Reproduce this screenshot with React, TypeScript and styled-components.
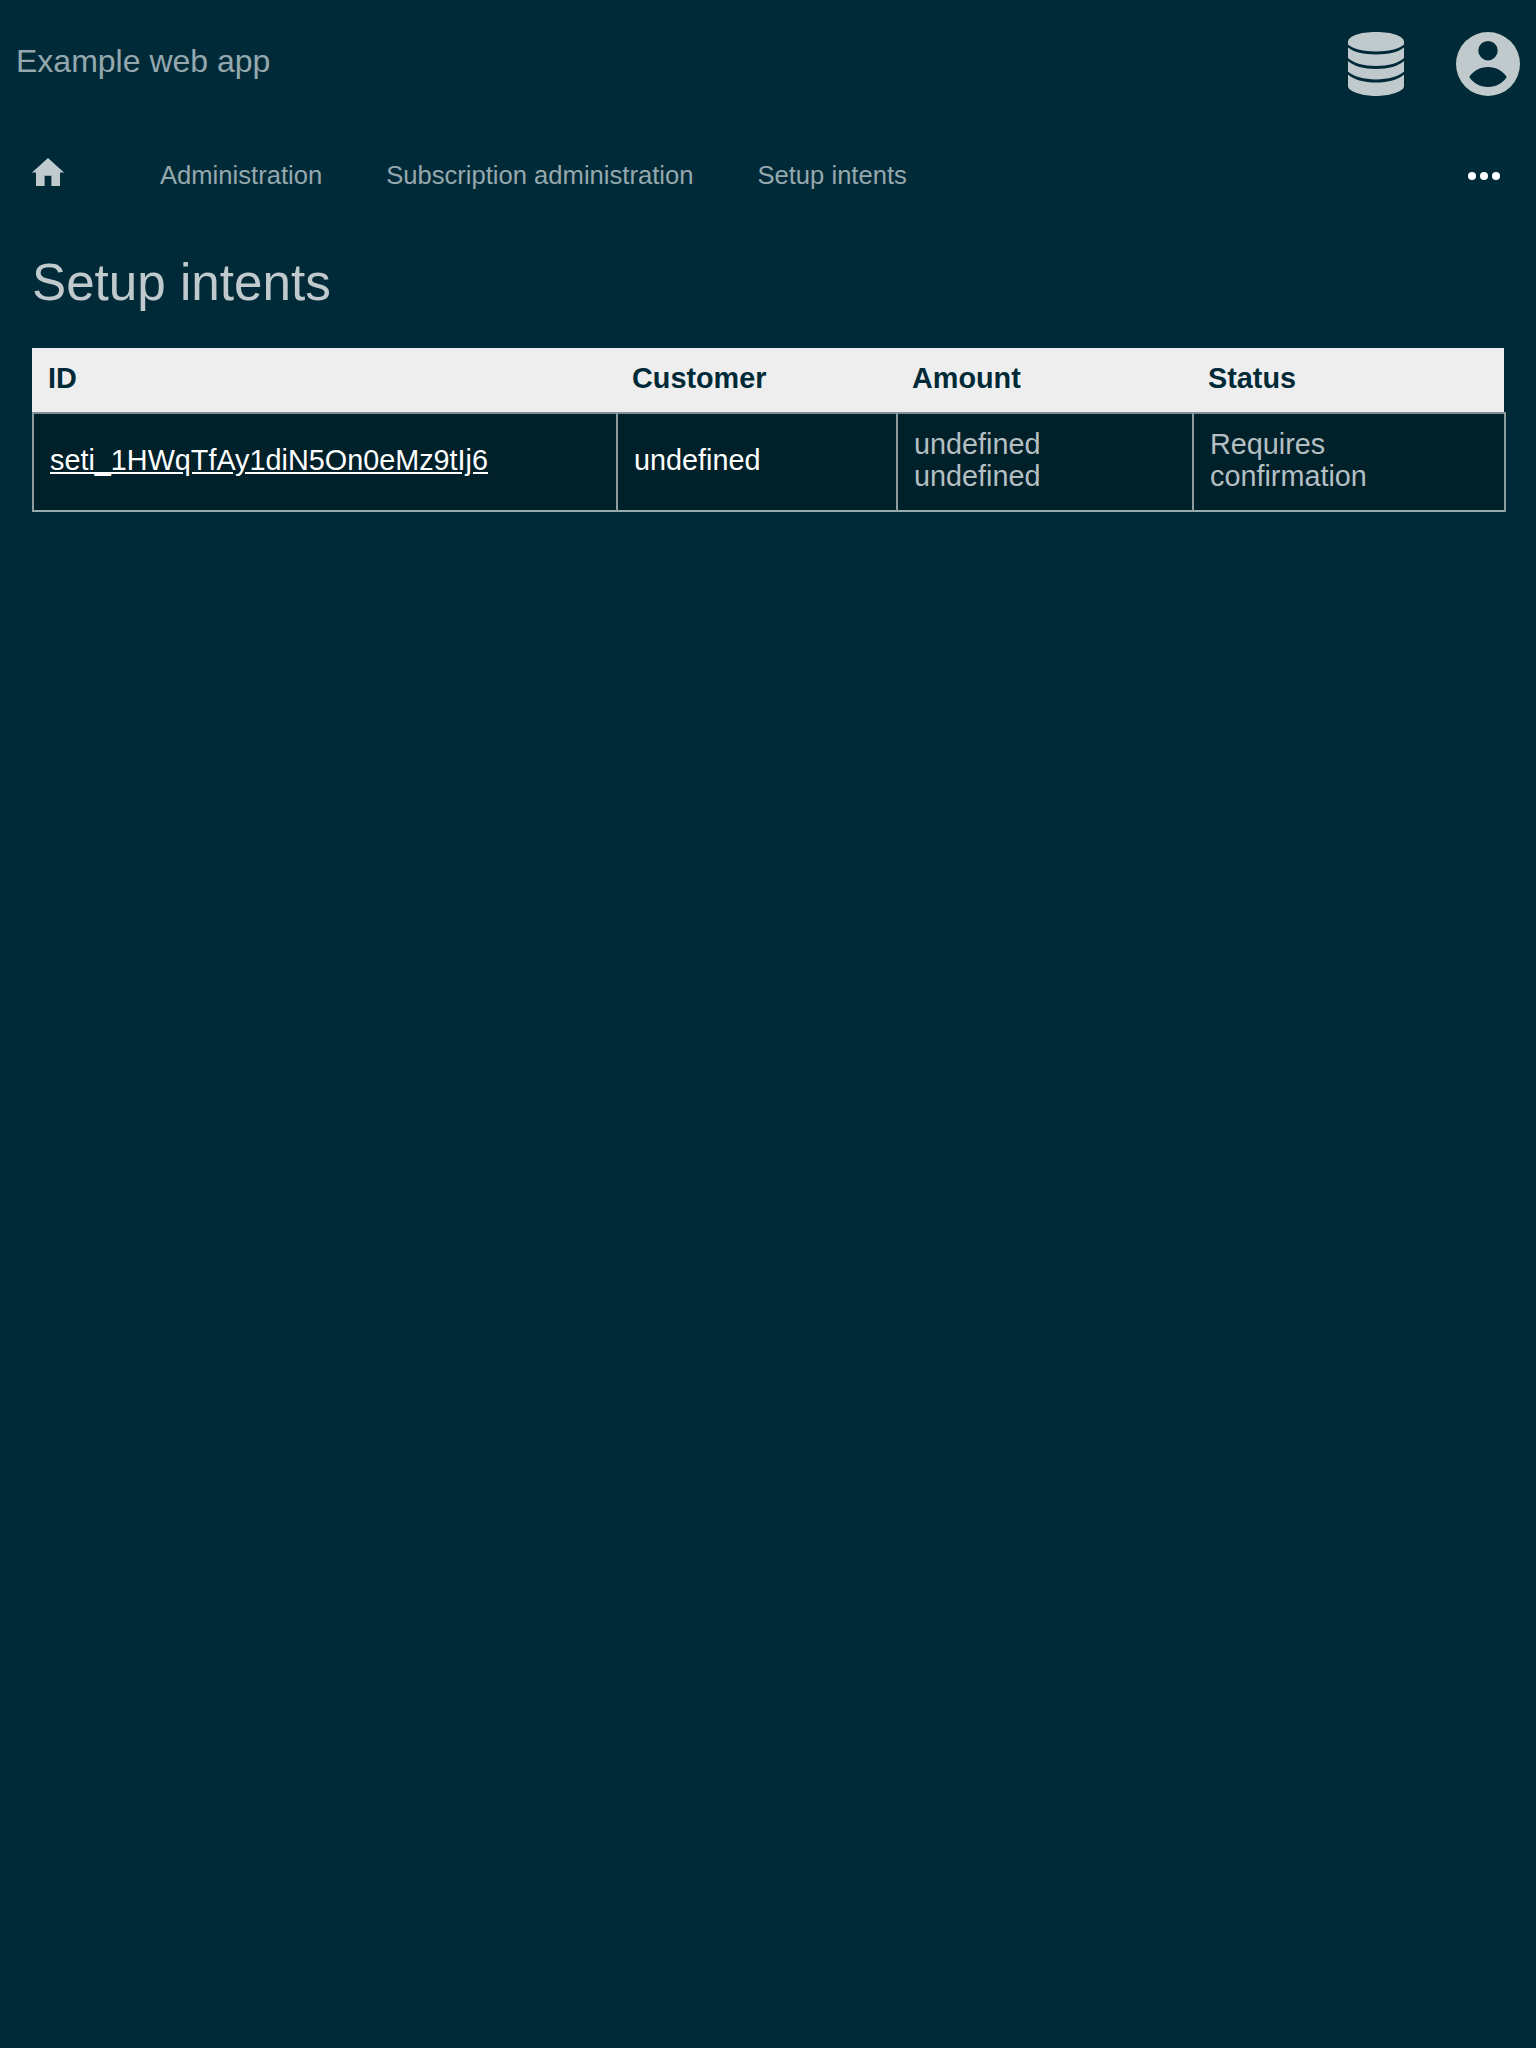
import React from 'react'
import styled, { createGlobalStyle } from 'styled-components'

const GlobalStyle = createGlobalStyle`
  html, body {
    margin: 0;
    padding: 0;
    min-height: 2048px;
    background: #012a38;
    font-family: "Liberation Sans", Arial, sans-serif;
  }
`

const Page = styled.div`
  min-height: 2048px;
  background: #012a38;
`

const TopBar = styled.header`
  display: flex;
  align-items: center;
  justify-content: space-between;
  height: 128px;
  padding: 0 16px;
  box-sizing: border-box;
`

const Brand = styled.a`
  font-size: 32px;
  color: #94a8ae;
  margin-bottom: 6px;
`

const TopIcons = styled.div`
  display: flex;
  align-items: center;
  gap: 52px;
  color: #c0cacd;
`

const Nav = styled.nav`
  display: flex;
  align-items: center;
  height: 96px;
  padding: 0 32px;
`

const HomeLink = styled.a`
  display: flex;
  color: #c0cacd;
  margin: 0 96px 8px 0;
`

const NavLink = styled.a`
  font-size: 25.6px;
  color: #94a8ae;
  margin: 0 64px 2px 0;
`

const More = styled.a`
  display: flex;
  gap: 4px;
  margin: 0 4px 0 auto;
`

const Dot = styled.span`
  width: 8px;
  height: 8px;
  border-radius: 50%;
  background: #ffffff;
`

const Main = styled.main`
  padding: 0 32px;
`

const Title = styled.h1`
  margin: 25px 0 31px;
  font-size: 51.2px;
  font-weight: 400;
  line-height: 68px;
  color: #c0cacd;
`

const Table = styled.table`
  width: 1472px;
  table-layout: fixed;
  border-collapse: separate;
  border-spacing: 0;
  font-size: 28.8px;
`

const HeadCell = styled.th<{ $width?: number }>`
  width: ${({ $width }) => ($width ? `${$width}px` : 'auto')};
  height: 64px;
  box-sizing: border-box;
  padding: 0 16px 4px;
  background: #eeeeee;
  color: #012a38;
  font-weight: 700;
  text-align: left;
`

const Cell = styled.td<{ $bright?: boolean; $last?: boolean }>`
  box-sizing: border-box;
  padding: 14px 16px 18px;
  background: #00202a;
  color: ${({ $bright }) => ($bright ? '#ffffff' : '#b3bfc3')};
  line-height: 32px;
  border-top: 2px solid #808f94;
  border-left: 2px solid #8d9b9f;
  border-bottom: 2px solid #99aaaf;
  box-shadow: ${({ $last }) => ($last ? '2px 0 0 #8d9b9f' : 'none')};
`

const IdLink = styled.a`
  color: #ffffff;
  text-decoration: underline;
`

const DatabaseIcon = () => (
  <svg width="56" height="64" viewBox="0 0 56 64" fill="currentColor">
    <path d="M0 10C0 4 12 0 28 0S56 4 56 10V12.5C51 17 40 19.4 28 19.4S5 17 0 12.5Z" />
    <path d="M0 15.5C5 20 16 22.4 28 22.4S51 20 56 15.5V26C51 31 40 34 28 34S5 31 0 26Z" />
    <path d="M0 29C5 34 16 37 28 37S51 34 56 29V39.5C51 44.5 40 47.4 28 47.4S5 44.5 0 39.5Z" />
    <path d="M0 42.5C5 47.5 16 50.6 28 50.6S51 47.5 56 42.5V54C56 60 40 64 28 64S0 60 0 54Z" />
  </svg>
)

const PersonIcon = () => (
  <svg width="64" height="64" viewBox="0 0 64 64" fill="currentColor" fillRule="evenodd">
    <path d="M32 0A32 32 0 1 1 32 64A32 32 0 1 1 32 0ZM32 9A9.7 9.7 0 1 0 32 28.4A9.7 9.7 0 1 0 32 9ZM13.3 45C17 39 24 35 32 35C40 35 47 39 50.7 45C47 51 40 55 32 55C24 55 17 51 13.3 45Z" />
  </svg>
)

const HomeIcon = () => (
  <svg width="32" height="28" viewBox="0 0 32 28" fill="currentColor">
    <path d="M16 0L32 14.5H28V28H19.4V17.7H12.6V28H4V14.5H0Z" />
  </svg>
)

const App = () => {
  return (
    <Page>
      <GlobalStyle />
      <TopBar>
        <Brand>Example web app</Brand>
        <TopIcons>
          <DatabaseIcon />
          <PersonIcon />
        </TopIcons>
      </TopBar>
      <Nav>
        <HomeLink>
          <HomeIcon />
        </HomeLink>
        <NavLink>Administration</NavLink>
        <NavLink>Subscription administration</NavLink>
        <NavLink>Setup intents</NavLink>
        <More>
          <Dot />
          <Dot />
          <Dot />
        </More>
      </Nav>
      <Main>
        <Title>Setup intents</Title>
        <Table>
          <thead>
            <tr>
              <HeadCell $width={584}>ID</HeadCell>
              <HeadCell $width={280}>Customer</HeadCell>
              <HeadCell $width={296}>Amount</HeadCell>
              <HeadCell>Status</HeadCell>
            </tr>
          </thead>
          <tbody>
            <tr>
              <Cell>
                <IdLink>seti_1HWqTfAy1diN5On0eMz9tIj6</IdLink>
              </Cell>
              <Cell $bright>undefined</Cell>
              <Cell>
                undefined
                <br />
                undefined
              </Cell>
              <Cell $last>Requires confirmation</Cell>
            </tr>
          </tbody>
        </Table>
      </Main>
    </Page>
  )
}

export default App
